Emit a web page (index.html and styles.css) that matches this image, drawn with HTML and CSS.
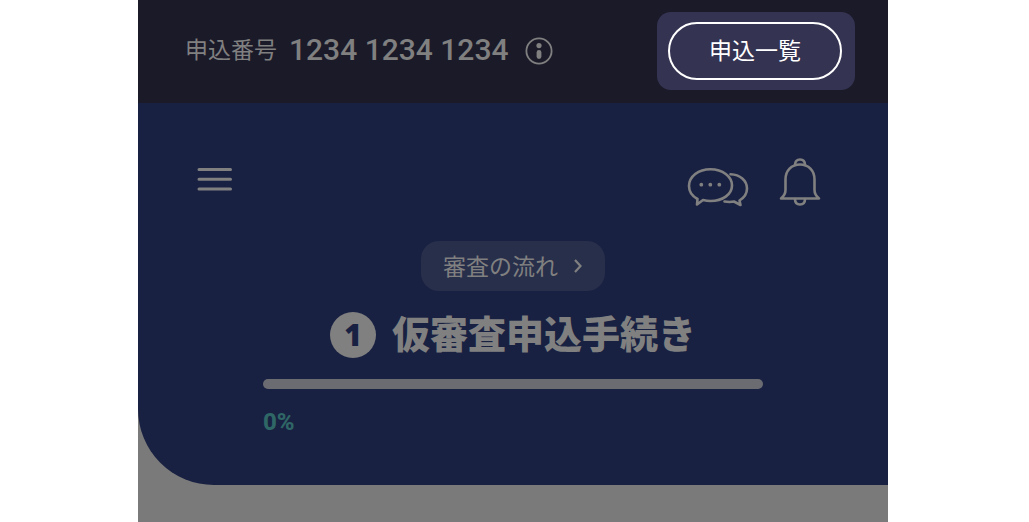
FILE: index.html
```html
<!DOCTYPE html>
<html lang="ja">
<head>
  <meta charset="UTF-8" />
  <meta name="viewport" content="width=device-width, initial-scale=1.0"/>
  <title>仮審査申込手続き</title>
  <link rel="stylesheet" href="styles.css">
</head>
<body>
  <div class="app">
    <header class="topbar">
      <div class="entry">
        <span class="entry-label">申込番号</span>
        <span class="entry-number">1234 1234 1234</span>
        <button type="button" class="icon-button info" aria-label="申込番号について">
          <svg width="28" height="28" viewBox="0 0 28 28">
            <circle cx="14" cy="14" r="12.6" fill="none" stroke="currentColor" stroke-width="1.8"/>
            <circle cx="14" cy="8.6" r="2.6" fill="currentColor"/>
            <rect x="11.6" y="13" width="4.8" height="9" rx="2.4" fill="currentColor"/>
          </svg>
        </button>
      </div>
      <div class="spotlight">
        <button type="button" class="list-button">申込一覧</button>
      </div>
    </header>

    <main class="hero">
      <nav class="hero-nav">
        <button type="button" class="icon-button menu" aria-label="メニュー">
          <svg width="36" height="26" viewBox="0 0 36 26" stroke="currentColor" stroke-width="3" stroke-linecap="round">
            <path d="M2 3.5H33.5M2 13.3H33.5M2 23H33.5"/>
          </svg>
        </button>
        <div class="hero-actions">
          <button type="button" class="icon-button" aria-label="チャット">
            <svg width="62" height="50" viewBox="0 0 62 50" fill="none" stroke="currentColor" stroke-width="2.6" stroke-linejoin="round" stroke-linecap="round">
              <path d="M10.5 42 C5 39 2 34.500 2 29 C2 19.500 11.500 12.200 23.500 12.200 S45 19.500 45 28.500 S35.500 44 23.500 44 C20.500 44 18 43.500 16 43 L10 47.500 Z"/>
              <path d="M43.500 17.200 C53 17.500 60 23.500 60 31.500 C60 36.500 57.500 40.500 52.500 43.500 L53.500 48 L47 44.500 C43.500 45.200 40.500 45 37.500 44.500"/>
              <g fill="currentColor" stroke="none">
                <circle cx="14.3" cy="27.7" r="1.9"/>
                <circle cx="23.3" cy="27.7" r="1.9"/>
                <circle cx="32.3" cy="27.7" r="1.9"/>
              </g>
            </svg>
          </button>
          <button type="button" class="icon-button" aria-label="お知らせ">
            <svg width="42" height="50" viewBox="0 0 42 50" fill="none" stroke="currentColor" stroke-width="2.6" stroke-linejoin="round" stroke-linecap="round">
              <path d="M2 41.5 C5.5 38.5 6.5 36.5 6.5 33 V22.5 C6.5 13.5 12.5 7.5 21 7.5 S35.5 13.5 35.5 22.5 V33 C35.5 36.5 36.5 38.5 40 41.5 Z"/>
              <path d="M16 8 C16 4.5 18 2.5 21 2.5 S26 4.5 26 8"/>
              <path d="M16 42 C16 45.5 18 47.5 21 47.5 S26 45.5 26 42"/>
            </svg>
          </button>
        </div>
      </nav>

      <a href="#flow" class="flow-link">
        審査の流れ
        <svg width="10" height="16" viewBox="0 0 10 16" fill="none" stroke="currentColor" stroke-width="2.2">
          <path d="M2 3 L7.5 9 L2 15"/>
        </svg>
      </a>

      <h1 class="step-title" id="flow">
        <span class="step-number">1</span>
        仮審査申込手続き
      </h1>

      <div class="progress">
        <div class="progress-track" role="progressbar" aria-label="進捗" aria-valuemin="0" aria-valuemax="100" aria-valuenow="0"></div>
        <span class="progress-value">0%</span>
      </div>
    </main>
  </div>
</body>
</html>
```

FILE: styles.css
```css
* {
  box-sizing: border-box;
}

body {
  margin: 0;
  padding-right: 3px;
  background-color: #fff;
  color: #808080;
  font-family: Roboto, "Noto Sans CJK JP", sans-serif;
}

.app {
  max-width: 750px;
  min-height: 100vh;
  margin: 0 auto;
  background-color: #7a7a7a;
}

button {
  font-family: inherit;
  cursor: pointer;
}

.icon-button {
  display: flex;
  padding: 0;
  border: none;
  background: none;
  color: inherit;
}

.topbar {
  display: flex;
  align-items: center;
  justify-content: space-between;
  padding: 12px 33px 13px 47px;
  background-color: #1b1a29;
}

.entry {
  display: flex;
  align-items: center;
}

.entry-label {
  font-size: 23px;
  line-height: 34px;
}

.entry-number {
  margin-left: 12px;
  font-size: 30px;
  font-weight: 500;
  line-height: 32px;
  padding-bottom: 2px;
}

.info {
  margin-left: 16px;
}

.spotlight {
  padding: 10px 13px 10px 11px;
  border-radius: 14px;
  background-color: #343352;
}

.list-button {
  display: block;
  width: 174px;
  height: 58px;
  padding: 0 0 4px;
  border: 2px solid #fff;
  border-radius: 29px;
  background: none;
  color: #fff;
  font-size: 23px;
}

.hero {
  display: flex;
  flex-direction: column;
  align-items: center;
  padding: 54px 59px 48px;
  border-bottom-left-radius: 76px;
  background-color: #192142;
}

.hero-nav {
  display: flex;
  align-self: stretch;
  align-items: center;
  justify-content: space-between;
  padding-right: 8px;
}

.menu {
  padding-bottom: 6px;
}

.hero-actions {
  display: flex;
  gap: 30px;
}

.flow-link {
  display: flex;
  align-items: center;
  gap: 15px;
  height: 50px;
  margin-top: 34px;
  padding: 0 22px 3px;
  border-radius: 18px;
  background-color: #282f4b;
  color: inherit;
  font-size: 23px;
  text-decoration: none;
}

.step-title {
  display: flex;
  align-items: center;
  gap: 16px;
  margin: 21px 0;
  font-size: 38px;
  font-weight: 900;
  line-height: 46px;
}

.step-number {
  width: 46px;
  height: 46px;
  border-radius: 50%;
  background-color: #808080;
  color: #192142;
  font-family: "Open Sans", "Noto Sans", sans-serif;
  font-size: 30px;
  font-weight: 800;
  text-align: center;
}

.progress {
  width: 100%;
  max-width: 500px;
}

.progress-track {
  height: 10px;
  border-radius: 5px;
  background-color: #6b6c71;
}

.progress-value {
  display: block;
  margin-top: 18px;
  color: #2f6666;
  font-size: 24px;
  font-weight: 800;
  line-height: 30px;
}
```
